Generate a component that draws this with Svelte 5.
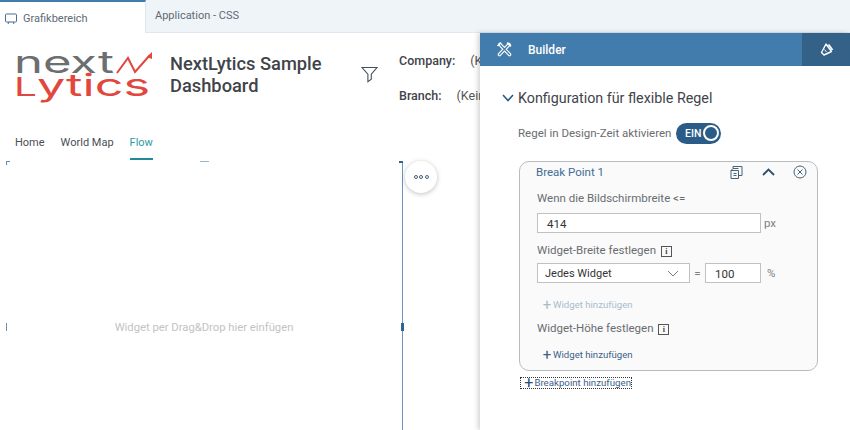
<script>
	let tabs = ['Home', 'World Map', 'Flow'];
	let active = 'Flow';
</script>

<div class="app">
	<div class="tabbar">
		<div class="tab tab--on">
			<svg width="12" height="12" viewBox="0 0 12 12" fill="none" stroke="#4a6f8f" stroke-width="1">
				<rect x="0.5" y="1" width="11" height="8" rx="1" />
				<path d="M3 11l1-2M9 11l-1-2" />
			</svg>
			<span>Grafikbereich</span>
		</div>
		<div class="tab">Application - CSS</div>
	</div>

	<header class="head">
		<svg class="logo" width="138" height="52" viewBox="0 0 138 52" fill="none">
			<text x="-2" y="21" class="logo-next" textLength="100" lengthAdjust="spacingAndGlyphs">next</text>
			<text x="-2" y="44" class="logo-lytics" textLength="136" lengthAdjust="spacingAndGlyphs"><tspan class="logo-l">L</tspan>ytics</text>
			<path d="M101 21L112 6l7 14L134 3" stroke="#e2473d" stroke-width="2" />
			<path d="M131 5l5-5 0 7z" fill="#e2473d" />
		</svg>
		<h1>NextLytics Sample Dashboard</h1>
		<svg class="filter" width="17" height="17" viewBox="0 0 17 17" fill="none" stroke="#44505a" stroke-width="1.1">
			<path d="M1 1.500h15l-5.700 6.600v5.200l-3.400 2.400V8.100z" />
		</svg>
		<dl class="vars">
			<div class="var"><dt>Company:</dt><dd>(Keine Auswahl)</dd></div>
			<div class="var"><dt>Branch:</dt><dd>(Keine Auswahl)</dd></div>
		</dl>
	</header>

	<nav class="pages">
		{#each tabs as t}
			<span class="page" class:page--on={t === active}>{t}</span>
		{/each}
	</nav>

	<main class="canvas">
		<span class="hint">Widget per Drag&amp;Drop hier einfügen</span>
		<i class="mark mark--tl"></i>
		<i class="mark mark--top"></i>
		<i class="mark mark--tr"></i>
		<i class="mark mark--left"></i>
		<i class="mark mark--right"></i>
		<button class="more" aria-label="Mehr"><b></b><b></b><b></b></button>
	</main>

	<aside class="panel">
		<div class="panel-head">
			<svg width="15" height="15" viewBox="0 0 15 15" fill="none" stroke-linecap="round">
				<path d="M3 2.500L12.500 12.500M12 2.500L2.500 12.500" stroke="#fff" stroke-width="3.600" />
				<path d="M3 2.500L12.500 12.500M12 2.500L2.500 12.500" stroke="#427cac" stroke-width="1.300" />
				<path d="M1 3.500L3.500 1M10.500 1.200l3 2.600" stroke="#fff" stroke-width="1.600" />
			</svg>
			<span class="panel-title">Builder</span>
			<div class="panel-side">
				<svg width="15" height="15" viewBox="0 0 15 15" fill="none" stroke="#fff" stroke-linejoin="round">
					<path d="M7 2L12.500 9.500 5 13 2.500 10.500z" stroke-width="1.400" />
					<path d="M9.500 2.500l4 5.500" stroke-width="1.800" />
					<path d="M5.500 7.500l2 2.500" stroke-width="1" />
				</svg>
			</div>
		</div>

		<div class="panel-body">
			<h2>
				<svg width="12" height="8" viewBox="0 0 12 8" fill="none" stroke="#2b5c87" stroke-width="1.600"><path d="M1 1l5 5.500L11 1" /></svg>
				<span>Konfiguration für flexible Regel</span>
			</h2>
			<div class="rule">
				<span>Regel in Design-Zeit aktivieren</span>
				<div class="switch">EIN<i></i></div>
			</div>

			<section class="card">
				<div class="card-head">
					<span>Break Point 1</span>
					<svg class="i-copy" width="13" height="14" viewBox="0 0 13 14" fill="none" stroke="#47637b"><path d="M1 5.500h7.500v8H1zM1 5.500L3 3.500h5.500M3 3.500V1.500h9v9h-3.500M3.500 8.500h3M3.500 10.500h3" /></svg>
					<svg class="i-up" width="13" height="8" viewBox="0 0 13 8" fill="none" stroke="#2b4f6e" stroke-width="1.800"><path d="M1 7l5.500-5.500L12 7" /></svg>
					<svg class="i-close" width="14" height="14" viewBox="0 0 14 14" fill="none" stroke="#47637b"><circle cx="7" cy="7" r="6" /><path d="M4.500 4.500l5 5M9.500 4.500l-5 5" /></svg>
				</div>

				<div class="label">Wenn die Bildschirmbreite &lt;=</div>
				<div class="row">
					<div class="field field--wide">414</div>
					<span class="unit">px</span>
				</div>

				<div class="label label--b">Widget-Breite festlegen <i class="info">i</i></div>
				<div class="row">
					<div class="field field--select">
						Jedes Widget
						<svg width="12" height="7" viewBox="0 0 12 7" fill="none" stroke="#6d7f8f"><path d="M1 1l5 5 5-5" /></svg>
					</div>
					<span class="eq">=</span>
					<div class="field field--num">100</div>
					<span class="unit unit--pct">%</span>
				</div>

				<button class="add add--off"><em>+</em>Widget hinzufügen</button>
				<div class="label label--c">Widget-Höhe festlegen <i class="info">i</i></div>
				<button class="add add--on"><em>+</em>Widget hinzufügen</button>
			</section>

			<button class="add-bp"><em>+</em>Breakpoint hinzufügen</button>
		</div>
	</aside>
</div>

<style>
	:global(body) {
		margin: 0;
		background: #fff;
	}

	.app {
		position: relative;
		width: 850px;
		height: 430px;
		overflow: hidden;
		font-family: Roboto, "Noto Sans", sans-serif;
		color: #333;
		background: #fff;
	}

	.tabbar {
		display: flex;
		height: 33px;
		box-sizing: border-box;
		background: #eff4f9;
		border-bottom: 1px solid #e0e7ee;
		font-size: 11px;
		color: #5f6a74;
	}

	.tab {
		padding: 10px 0 0 9px;
		line-height: 12px;
	}

	.tab--on {
		display: flex;
		align-items: center;
		gap: 6px;
		width: 146px;
		height: 33px;
		box-sizing: border-box;
		padding: 3px 0 0 5px;
		background: #fff;
		border-top: 2px solid #427cac;
		border-right: 1px solid #dfe6ec;
	}

	.head {
		display: flex;
		height: 75px;
		box-sizing: border-box;
		padding: 18px 0 0 16px;
	}

	.logo {
		flex: none;
		margin-top: 1px;
		overflow: visible;
	}

	.logo-next,
	.logo-lytics {
		font-family: Inter, sans-serif;
		font-size: 31px;
		font-weight: 400;
	}

	.logo-next {
		fill: #6c6e70;
	}

	.logo-lytics {
		fill: #e2473d;
	}

	.logo-l {
		font-size: 25px;
	}

	h1 {
		flex: none;
		width: 176px;
		margin: 2px 0 0 16px;
		font-size: 18.300px;
		line-height: 21.500px;
		font-weight: 500;
		color: #3f444a;
	}

	.filter {
		flex: none;
		margin: 15px 0 0 15px;
	}

	.vars {
		margin: 1px 0 0 21px;
		font-size: 12.500px;
	}

	.var {
		display: flex;
		gap: 15px;
		height: 35px;
		line-height: 17px;
		white-space: nowrap;
	}

	dt {
		font-weight: 500;
		color: #3f444a;
	}

	dd {
		margin: 0;
		color: #555;
	}

	.pages {
		display: flex;
		gap: 16px;
		height: 52px;
		box-sizing: border-box;
		padding: 27px 0 0 15px;
		font-size: 11px;
		line-height: 16px;
		color: #4a4f55;
	}

	.page {
		height: 25px;
		box-sizing: border-box;
	}

	.page--on {
		color: #2d9aa8;
		border-bottom: 2px solid #1e8a9a;
	}

	.canvas {
		position: relative;
		display: flex;
		align-items: center;
		justify-content: center;
		width: 397px;
		height: 330px;
		margin: 1px 0 0 6px;
		padding-top: 2px;
		box-sizing: border-box;
		border-right: 1px solid #6a97bd;
	}

	.hint {
		font-size: 11.250px;
		color: #c3c3c3;
	}

	.mark {
		position: absolute;
		background: #6a8fae;
	}

	.mark--tl {
		left: 0;
		top: 0;
		width: 4px;
		height: 4px;
		background: none;
		border-left: 1px solid #6a8fae;
		border-top: 1px solid #6a8fae;
		box-sizing: border-box;
	}

	.mark--top {
		left: 194px;
		top: 0;
		width: 9px;
		height: 1px;
		background: #9db4c7;
	}

	.mark--tr {
		right: -1px;
		top: 0;
		width: 4px;
		height: 2px;
		background: #2f6492;
	}

	.mark--left {
		left: 0;
		top: 162px;
		width: 1px;
		height: 8px;
	}

	.mark--right {
		right: -2px;
		top: 162px;
		width: 3px;
		height: 8px;
		background: #2f6492;
	}

	.more {
		position: absolute;
		left: 399px;
		top: 0;
		display: flex;
		align-items: center;
		justify-content: center;
		gap: 1.500px;
		width: 32px;
		height: 32px;
		padding: 0;
		border: 0;
		border-radius: 50%;
		background: #fff;
		box-shadow: 0 1px 5px rgba(0, 0, 0, 0.25);
	}

	.more b {
		width: 4px;
		height: 4px;
		box-sizing: border-box;
		border: 1px solid #46627a;
		border-radius: 50%;
	}

	.panel {
		position: absolute;
		left: 480px;
		top: 33px;
		width: 370px;
		height: 397px;
		background: #fff;
		box-shadow: -2px 0 5px rgba(0, 0, 0, 0.18);
	}

	.panel-head {
		display: flex;
		align-items: center;
		height: 33px;
		padding-left: 17px;
		background: #427cac;
		color: #fff;
	}

	.panel-title {
		margin-left: 16px;
		font-size: 12px;
		font-weight: 500;
	}

	.panel-side {
		display: flex;
		align-items: center;
		justify-content: center;
		width: 48px;
		height: 33px;
		margin-left: auto;
		background: #346187;
	}

	.panel-body {
		padding: 22px 33px 0 22px;
	}

	h2 {
		display: flex;
		align-items: center;
		gap: 4px;
		margin: 0;
		font-size: 14.300px;
		line-height: 20px;
		font-weight: 400;
		color: #3f444a;
	}

	.rule {
		display: flex;
		align-items: center;
		justify-content: space-between;
		width: 203px;
		height: 22px;
		margin: 14px 0 0 16px;
		font-size: 11.500px;
		color: #6a6d70;
	}

	.switch {
		display: flex;
		align-items: center;
		justify-content: space-between;
		width: 45px;
		height: 21px;
		box-sizing: border-box;
		padding: 0 1px 0 9px;
		border-radius: 11px;
		background: #2b5c87;
		color: #fff;
		font-size: 10.500px;
		font-weight: 500;
	}

	.switch i {
		width: 12px;
		height: 12px;
		border: 2px solid #fff;
		border-radius: 50%;
		margin-right: 1px;
	}

	.card {
		width: 299px;
		height: 210px;
		box-sizing: border-box;
		margin: 17px 0 0 17px;
		padding: 0 0 0 17px;
		border: 1px solid #b9bcbf;
		border-radius: 10px;
		background: #fafafa;
		font-size: 11.500px;
		color: #6a6d70;
	}

	.card-head {
		display: flex;
		align-items: center;
		height: 20px;
		color: #3f6d94;
	}

	.card-head span {
		width: 194px;
		margin-left: -1px;
	}

	.i-up {
		margin-left: 19px;
	}

	.i-close {
		margin-left: 18px;
	}

	.label {
		margin-top: 8px;
		line-height: 16px;
	}

	.label--b {
		margin-top: 9px;
	}

	.label--c {
		margin-top: 8px;
	}

	.info {
		display: inline-block;
		width: 9px;
		height: 9px;
		margin-left: 2px;
		border: 1px solid #555;
		font: 700 8px/9px "Liberation Serif", serif;
		text-align: center;
		color: #444;
	}

	.row {
		display: flex;
		align-items: center;
		margin-top: 7px;
		height: 20px;
	}

	.field {
		display: flex;
		align-items: center;
		height: 20px;
		box-sizing: border-box;
		padding: 1px 0 0 9px;
		background: #fff;
		border: 1px solid #bfc2c5;
		color: #333;
	}

	.label--b + .row {
		margin-top: 5px;
	}

	.field--wide {
		width: 224px;
	}

	.field--select {
		justify-content: space-between;
		width: 153px;
		padding: 1px 10px 0 7px;
		font-size: 11px;
	}

	.field--num {
		width: 56px;
	}

	.unit {
		margin-left: 3px;
		color: #7b7e81;
	}

	.unit--pct {
		margin-left: 6px;
	}

	.eq {
		width: 15px;
		text-align: center;
		color: #7b7e81;
	}

	.add {
		display: flex;
		align-items: center;
		padding: 0;
		margin: 0 0 0 4px;
		border: 0;
		background: none;
		font: 9.600px/14px Roboto, sans-serif;
	}

	.add em {
		width: 12px;
		font-style: normal;
		font-size: 15px;
	}

	.add--off {
		margin-top: 15px;
		color: #a9bccb;
	}

	.add--on {
		margin-top: 12px;
		color: #3a6286;
	}

	.add-bp {
		display: flex;
		align-items: center;
		width: 112px;
		height: 12px;
		box-sizing: border-box;
		margin: 6px 0 0 18px;
		padding: 0 0 0 2px;
		border: 1px dotted #333;
		background: none;
		font: 9.700px/10px Roboto, sans-serif;
		color: #3a6286;
		white-space: nowrap;
	}

	.add-bp em {
		width: 12px;
		font-style: normal;
		font-size: 16px;
		color: #2b4f6e;
	}
</style>
